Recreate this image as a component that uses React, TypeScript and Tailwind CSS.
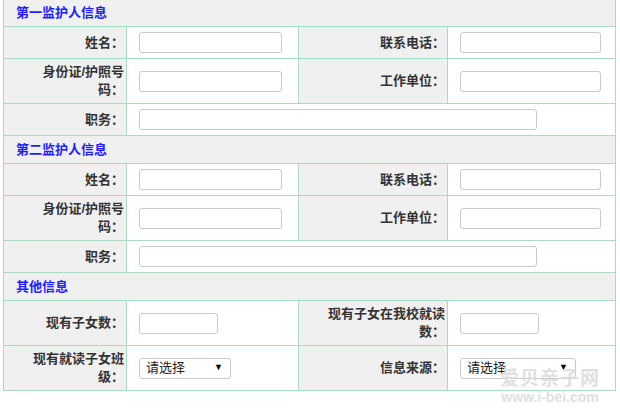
import type { ReactNode } from 'react';

const font = { fontFamily: '"Liberation Sans", "Noto Sans CJK SC", sans-serif' };

function Header({ title, first }: { title: string; first?: boolean }) {
  return (
    <div
      className={`col-span-4 flex items-center bg-[#f0f0f0] border-r border-b border-[#a9dbc3] pl-[12px] text-[13px] font-bold text-[#1e1eff] ${
        first ? 'h-[27px]' : 'h-[28px]'
      }`}
    >
      {title}
    </div>
  );
}

function Label({ children, wide }: { children: ReactNode; wide?: boolean }) {
  return (
    <div
      className={`flex items-center justify-end bg-[#f0f0f0] border-r border-b border-[#a9dbc3] pr-[2px] text-right text-[13px] font-bold leading-[18px] text-[#333] ${
        wide ? 'pl-[25px]' : 'pl-[27px]'
      }`}
    >
      <span>{children}</span>
    </div>
  );
}

function Cell({ children, span }: { children: ReactNode; span?: boolean }) {
  return (
    <div
      className={`flex items-center bg-white border-r border-b border-[#a9dbc3] pl-[12px] ${
        span ? 'col-span-3' : ''
      }`}
    >
      {children}
    </div>
  );
}

function Input({ w }: { w: string }) {
  return <div className={`h-[21px] ${w} rounded-[3px] border border-[#c9c9c9] bg-white`} />;
}

function Select({ w }: { w: string }) {
  return (
    <div
      className={`flex h-[21px] ${w} items-center justify-between rounded-[3px] border border-[#c9c9c9] bg-white pl-[6px] pr-[7px] text-[13px] text-[#222]`}
    >
      <span>请选择</span>
      <span className="text-[9px] text-black">▼</span>
    </div>
  );
}

function Guardian({ title, first }: { title: string; first?: boolean }) {
  return (
    <>
      <Header title={title} first={first} />
      <Label>姓名：</Label>
      <Cell>
        <Input w="w-[143px]" />
      </Cell>
      <Label wide>联系电话：</Label>
      <Cell>
        <Input w="w-[141px]" />
      </Cell>

      <Label>身份证/护照号码：</Label>
      <Cell>
        <Input w="w-[143px]" />
      </Cell>
      <Label wide>工作单位：</Label>
      <Cell>
        <Input w="w-[141px]" />
      </Cell>

      <Label>职务：</Label>
      <Cell span>
        <Input w="w-[398px]" />
      </Cell>
    </>
  );
}

export default function App() {
  return (
    <div className="relative h-[409px] w-[620px] overflow-hidden bg-white" style={font}>
      <div className="ml-[3px] grid w-[613px] grid-cols-[123px_172px_149px_168px] grid-rows-[27px_32px_45px_32px_28px_32px_45px_32px_28px_45px_45px] border-l border-[#a9dbc3]">
        <Guardian title="第一监护人信息" first />
        <Guardian title="第二监护人信息" />

        <Header title="其他信息" />
        <Label>现有子女数：</Label>
        <Cell>
          <Input w="w-[79px]" />
        </Cell>
        <Label wide>现有子女在我校就读数：</Label>
        <Cell>
          <Input w="w-[79px]" />
        </Cell>

        <Label>现有就读子女班级：</Label>
        <Cell>
          <Select w="w-[92px]" />
        </Cell>
        <Label wide>信息来源：</Label>
        <Cell>
          <Select w="w-[116px]" />
        </Cell>
      </div>

      {/* watermark */}
      <div className="pointer-events-none absolute left-[498px] top-[368px] flex w-[104px] flex-col items-center whitespace-nowrap text-[#d9d9d9]">
        <span className="text-[19px] font-bold leading-[22px] tracking-[1px] opacity-80">爱贝亲子网</span>
        <span className="text-[14px] font-bold leading-[15px] opacity-80">www.i-bei.com</span>
      </div>
    </div>
  );
}
